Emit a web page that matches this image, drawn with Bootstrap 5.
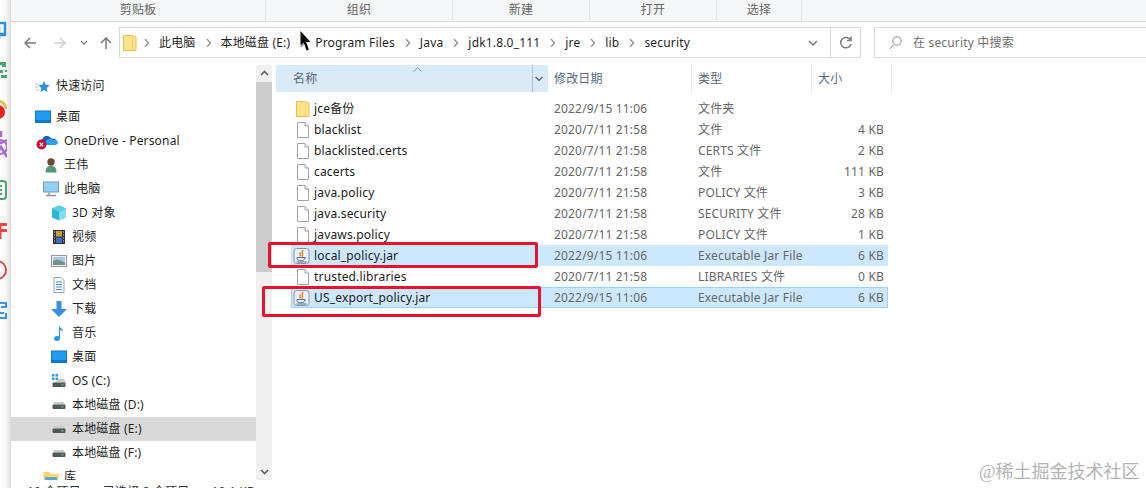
<!doctype html>
<html lang="zh-CN">
<head>
<meta charset="utf-8">
<title>security</title>
<link href="https://cdn.jsdelivr.net/npm/bootstrap@5.3.0/dist/css/bootstrap.min.css" rel="stylesheet">
<style>
html,body{height:488px;overflow:hidden;background:#fff}
body{font:12px/16px "Noto Sans","Noto Sans CJK SC",sans-serif;color:#1f1f1f;letter-spacing:.17px}
.app{height:488px;width:1146px}
.edge{width:11px;flex:none;background:linear-gradient(90deg,#fff 0,#f6f6f6 55%,#dcdcdc 100%);padding-top:10px;overflow:hidden}
.edge-cell{height:40px;flex:none;display:flex;align-items:center}
.edge svg{display:block;margin-left:-13px;flex:none}
.main-col{width:1135px;flex:none;min-height:0}
.ribbon{height:22px;background:#f5f6f7;border-bottom:1px solid #dadbdc;color:#666;flex:none;line-height:19px}
.ribbon>div{text-align:center;border-right:1px solid #e4e5e6;height:21px}
.rb1{width:255px}.rb2{width:187px}.rb3{width:137px}.rb4{width:127px}.rb5{width:85px}
.addr{height:43px;flex:none;padding:5px 0 0 13px}
.nav-ico{width:12px;height:12px;flex:none;display:block;margin-top:10px}
.nb1{margin-right:18px}.nb2{margin-right:14px}.nb3{width:8px;margin-right:12px}.nb4{margin-right:7px}
.crumbs{width:742px;height:31px;border:1px solid #d9d9d9;padding-left:3px;flex:none;white-space:nowrap}
.crumb-fold{flex:none;margin-right:-3px}
.crumb-sep{width:6px;height:8px;flex:none;margin:0 9px 0 10px}
.crumb-end{margin-left:auto;width:30px;height:29px;border-left:1px solid #d9d9d9}
.search{width:274px;height:31px;border:1px solid #d9d9d9;border-right:0;margin-left:13px;flex:none;padding-left:14px;color:#6d6d6d;gap:11px}
.panes{height:415px;flex:none}
.tree{width:245px;height:415px;flex:none;padding-top:9px;white-space:nowrap;overflow:hidden}
.tree-row{height:24px}
.tree-row svg{flex:none;margin-right:5px}
.l1{padding-left:24px}.l2{padding-left:32px}.l3{padding-left:40px}
.gapped{margin-bottom:7px}
.tree-sel{background:#d9d9d9}
.od{padding-left:25px}
.sbar{width:16px;flex:none;background:#f0f0f0}
.sb-btn{height:17px;flex:none}
.sb-thumb{height:190px;background:#cdcdcd;flex:none}
.files{margin-left:4px;min-width:0}
.fhead{height:27px;color:#56677c;flex:none}
.hname{width:272px;background:#d9ebf9;padding-left:17px;position:relative}
.hname i{position:absolute;right:15px;top:0;bottom:0;width:1px;background:#a9c4da}
.hcaret{position:absolute;left:137px;top:2px}
.hchev{position:absolute;right:5px;top:11px}
.hcell{border-right:1px solid #e5e5e5;padding-left:6px}
.hdate{width:144px}.htype{width:120px}.hsize{width:80px}
.fbody{padding-top:6px}
.frow{height:21px;width:597px;margin-left:15px;border:1px solid transparent;white-space:nowrap}
.frow.sel{background:#cce8ff}
.frow.sel2{border-color:#99d1ff}
.cn{width:257px;padding-left:4px;flex:none;color:#1a1a1a}
.cn svg{flex:none;margin-right:4px}
.cn svg.jar-ico{margin-left:-3px;margin-right:4px}
.cd{width:143px;padding-left:5px;color:#666;flex:none}
.ct{width:120px;padding-left:6px;color:#666;flex:none}
.cs{width:75px;text-align:right;color:#666;padding-right:3px;flex:none}
.status{padding:4px 0 0 16px;color:#333;white-space:nowrap;gap:22px}
.redbox{position:absolute;border:3px solid #e5132f;border-radius:2px;pointer-events:none}
.rb-a{left:268px;top:242px;width:270px;height:26px}
.rb-b{left:262px;top:286px;width:279px;height:31px}
.cursor{position:absolute;left:300px;top:31px}
.mark-wm{position:absolute;left:979px;top:462px;font:18px/20px "Liberation Serif","Noto Sans CJK SC",serif;letter-spacing:0;color:#b4b4b4;white-space:nowrap}
</style>
</head>
<body>
<svg width="0" height="0" class="position-absolute">
<defs>
<symbol id="folder" viewBox="0 0 14 16"><path d="M.5.5h9l3.500 1.500v13.500H.5z" fill="#ffe48a" stroke="#e4bd5a"/><path d="M9.500 2v13" stroke="#f2cf6e"/></symbol>
<symbol id="page" viewBox="0 0 14 16"><path d="M1.500.5h7.500l3.500 3.500v11.500h-11z" fill="#fff" stroke="#a3a3a3"/><path d="M9 .5V4h3.500" fill="#f0f0f0" stroke="#a3a3a3"/></symbol>
<symbol id="jar" viewBox="0 0 16 16"><rect x=".5" y=".5" width="15" height="15" rx="2.500" fill="#eaf0f6" stroke="#8296aa"/><path d="M9.800 2c-3.300 2.500 1.200 3.700-1.600 6.500M7 4.500c-1.500 1.500.5 2.300-.5 4" fill="none" stroke="#e8791d" stroke-width="1.300"/><path d="M3.500 9.500h7.500v1.200c0 1.300-1.400 2-3.700 2s-3.800-.7-3.800-2zM11 10h1.500" fill="none" stroke="#4f6f9a"/><path d="M3 14h10" stroke="#4f6f9a"/></symbol>
<symbol id="drive" viewBox="0 0 16 16"><path d="M2 7.500 3.500 5h9L14 7.500z" fill="#c9c9c9"/><rect x="1.500" y="7.500" width="13" height="4.500" rx="1" fill="#555"/><rect x="10.500" y="9" width="2" height="1.500" fill="#4ec46a"/></symbol>
<symbol id="desk" viewBox="0 0 16 16"><rect x=".5" y="2" width="15" height="11.500" fill="#1e9cf2" stroke="#0f74c2"/><path d="M1 12h14" stroke="#0a5a98"/></symbol>
<symbol id="csep" viewBox="0 0 6 8"><path d="M1 0l3.500 4L1 8" fill="none" stroke="#8a8a8a" stroke-width="1.200"/></symbol>
</defs>
</svg>

<div class="app d-flex">
  <div class="edge d-flex flex-column">
    <div class="edge-cell"><svg width="20" height="18" viewBox="0 0 20 18"><path d="M4 2h14v11H4M12 6v12M7 14h12" fill="none" stroke="#2f8fe6" stroke-width="2.500"/></svg></div>
    <div class="edge-cell"><svg width="20" height="18" viewBox="0 0 20 18"><path d="M4 1h15v5h-4V4H4zM13 9h3v3h-3zM18 9h2v2h-2zM14 14h6v3h-6z" fill="#46a86b"/></svg></div>
    <div class="edge-cell"><svg width="20" height="20" viewBox="0 0 20 20"><circle cx="11" cy="12" r="7" fill="#e8231c"/><path d="M10 1c5 0 9 3 9 8" fill="none" stroke="#f0b23a" stroke-width="2.500"/></svg></div>
    <div class="edge-cell"><svg width="20" height="40" viewBox="0 0 20 40"><path d="M14 1v6M6 10l8 3 6-3M8 27l6-10 6 10" fill="none" stroke="#a56ad8" stroke-width="2.500"/><circle cx="13" cy="17" r="7" fill="none" stroke="#a56ad8" stroke-width="2"/></svg></div>
    <div class="edge-cell"><svg width="20" height="20" viewBox="0 0 20 20"><rect x="4" y="1" width="15" height="18" rx="3" fill="none" stroke="#4aa56f" stroke-width="2"/><path d="M10 6h5M10 10h5M10 14h5" stroke="#4aa56f" stroke-width="2"/></svg></div>
    <div class="edge-cell"><svg width="20" height="17" viewBox="0 0 20 17"><path d="M11 1h9v3h-5.500v3H20v3h-5.500v7H11V4H5V1z" fill="#ef4444"/></svg></div>
    <div class="edge-cell"><svg width="20" height="22" viewBox="0 0 20 22"><circle cx="10" cy="11" r="9" fill="none" stroke="#e14a55" stroke-width="2"/><circle cx="10" cy="11" r="3" fill="#e14a55"/></svg></div>
    <div class="edge-cell"><svg width="20" height="18" viewBox="0 0 20 18"><path d="M11 6V2h8v5M19 12v5h-8M14 6h5M11 12h6" fill="none" stroke="#3c94e6" stroke-width="2.200"/></svg></div>
  </div>

  <div class="main-col d-flex flex-column">
    <div class="ribbon d-flex">
      <div class="rb1">剪贴板</div><div class="rb2">组织</div><div class="rb3">新建</div><div class="rb4">打开</div><div class="rb5">选择</div>
    </div>

    <div class="addr d-flex align-items-start">
      <svg class="nav-ico nb1" viewBox="0 0 12 12"><path d="M12 6H1M6 1 1 6l5 5" fill="none" stroke="#7b7b7b" stroke-width="1.500"/></svg>
      <svg class="nav-ico nb2" viewBox="0 0 12 12"><path d="M0 6h11M6 1l5 5-5 5" fill="none" stroke="#d0d0d0" stroke-width="1.500"/></svg>
      <svg class="nav-ico nb3" viewBox="0 0 8 12"><path d="M1 4l3 3 3-3" fill="none" stroke="#8a8a8a" stroke-width="1.400"/></svg>
      <svg class="nav-ico nb4" viewBox="0 0 12 12"><path d="M6 12V1M1 6l5-5 5 5" fill="none" stroke="#7b7b7b" stroke-width="1.500"/></svg>
      <div class="crumbs d-flex align-items-center">
        <svg class="crumb-fold" width="14" height="16"><use href="#folder"/></svg>
        <svg class="crumb-sep"><use href="#csep"/></svg><span>此电脑</span>
        <svg class="crumb-sep"><use href="#csep"/></svg><span>本地磁盘 (E:)</span>
        <svg class="crumb-sep"><use href="#csep"/></svg><span>Program Files</span>
        <svg class="crumb-sep"><use href="#csep"/></svg><span>Java</span>
        <svg class="crumb-sep"><use href="#csep"/></svg><span>jdk1.8.0_111</span>
        <svg class="crumb-sep"><use href="#csep"/></svg><span>jre</span>
        <svg class="crumb-sep"><use href="#csep"/></svg><span>lib</span>
        <svg class="crumb-sep"><use href="#csep"/></svg><span>security</span>
        <svg class="ms-auto me-2" width="10" height="8" viewBox="0 0 10 8"><path d="M1 2l4 4 4-4" fill="none" stroke="#7b7b7b" stroke-width="1.500"/></svg>
        <div class="crumb-end d-flex align-items-center justify-content-center ms-1">
          <svg width="14" height="14" viewBox="0 0 14 14"><path d="M11.500 4A5.200 5.200 0 1 0 12 8M8 4.500h4v-4" fill="none" stroke="#7b7b7b" stroke-width="1.500"/></svg>
        </div>
      </div>
      <div class="search d-flex align-items-center">
        <svg width="13" height="14" viewBox="0 0 13 14"><circle cx="8" cy="5" r="4.200" fill="none" stroke="#8c8c8c"/><path d="M5 8.500.8 13" stroke="#8c8c8c"/></svg>
        <span>在 security 中搜索</span>
      </div>
    </div>

    <div class="panes d-flex">
      <div class="tree">
        <div class="tree-row gapped d-flex align-items-center l1"><svg width="16" height="16" viewBox="0 0 16 16"><path d="M9 3l1.700 3.700 4 .5-3 2.700.8 4L9 12 5.500 14l.8-4-3-2.700 4-.5z" fill="#2d8fe3"/><path d="M0 6h4M0 9h3M1 12h3" stroke="#9cc9ee"/></svg><span>快速访问</span></div>
        <div class="tree-row d-flex align-items-center l1"><svg width="16" height="16"><use href="#desk"/></svg><span>桌面</span></div>
        <div class="tree-row d-flex align-items-center od"><svg width="23" height="18" viewBox="0 0 23 18"><path d="M6 9c0-3 2-5 5-5 2 0 3.500 1 4 2.500 3-.5 6 1 6 3.500 0 2-1.500 3-3 3H8c-1.500 0-2-2-2-4z" fill="#0f62b8"/><path d="M11 8c2-2 4-1 5-.3 3-.3 6 1 6 2.800 0 1.500-1.500 2.500-3 2.500h-9c-2 0-2.500-3.500 1-5z" fill="#2aa0ef"/><circle cx="5.500" cy="12.500" r="5" fill="#c40f35"/><path d="M3.700 10.700l3.600 3.600M7.300 10.700l-3.600 3.600" stroke="#fff" stroke-width="1.200"/></svg><span>OneDrive - Personal</span></div>
        <div class="tree-row d-flex align-items-center l2"><svg width="16" height="16" viewBox="0 0 16 16"><circle cx="8" cy="5" r="3.700" fill="#6b4a35"/><path d="M2.500 15.500c0-5 2-6.500 5.500-6.500s5.500 1.500 5.500 6.500z" fill="#4f9a74"/></svg><span>王伟</span></div>
        <div class="tree-row d-flex align-items-center l2"><svg width="16" height="16" viewBox="0 0 16 16"><rect x=".5" y="1" width="15" height="10" fill="#8fd0f6" stroke="#7d97ad"/><path d="M6 11.500v2M3 14.500h10" stroke="#8b96a1" stroke-width="1.500"/></svg><span>此电脑</span></div>
        <div class="tree-row d-flex align-items-center l3"><svg width="16" height="16" viewBox="0 0 16 16"><path d="M8 .5l7 3v9l-7 3-7-3v-9z" fill="#2bb6d8"/><path d="M8 7v8.500l7-3v-9z" fill="#7fdcf0"/><path d="M1 3.500 8 7l7-3.500L8 .5z" fill="#5ecde6"/></svg><span>3D 对象</span></div>
        <div class="tree-row d-flex align-items-center l3"><svg width="16" height="16" viewBox="0 0 16 16"><rect x="2" y="1" width="12" height="14" fill="#333"/><rect x="5" y="2" width="6" height="5.500" fill="#c5a13a"/><rect x="5" y="8.500" width="6" height="5.500" fill="#3c6fc8"/><path d="M3 3h1M3 6h1M3 9h1M3 12h1M12 3h1M12 6h1M12 9h1M12 12h1" stroke="#ddd"/></svg><span>视频</span></div>
        <div class="tree-row d-flex align-items-center l3"><svg width="16" height="16" viewBox="0 0 16 16"><rect x=".5" y="2.500" width="15" height="11" fill="#eef2f6" stroke="#8b97a3"/><path d="M2 4h12v4H2z" fill="#a8c8e8"/><path d="M2 8l4-1.500L14 9v3H2z" fill="#6f9484"/></svg><span>图片</span></div>
        <div class="tree-row d-flex align-items-center l3"><svg width="16" height="16" viewBox="0 0 16 16"><path d="M3 .5h7l3 3v12H3z" fill="#f7fafc" stroke="#98a4b0"/><path d="M5 5h6M5 7.500h6M5 10h6M5 12.500h6" stroke="#4f8fc9"/></svg><span>文档</span></div>
        <div class="tree-row d-flex align-items-center l3"><svg width="16" height="16" viewBox="0 0 16 16"><path d="M5.500 0h5v8H16l-8 8-8-8h5.500z" fill="#3a8fdc"/></svg><span>下载</span></div>
        <div class="tree-row d-flex align-items-center l3"><svg width="16" height="16" viewBox="0 0 16 16"><path d="M8 0c0 3 4 3 4 7-1-1.500-2-2-3-2v8c0 1.700-1.500 3-3.300 3S3 15 3 13.500 4.500 11 6 11c.6 0 1.200.1 2 .5z" fill="#1f97ea"/></svg><span>音乐</span></div>
        <div class="tree-row d-flex align-items-center l3"><svg width="16" height="16"><use href="#desk"/></svg><span>桌面</span></div>
        <div class="tree-row d-flex align-items-center l3"><svg width="16" height="16" viewBox="0 0 16 16"><path d="M1 1h2.500v2.500H1zM4.500 1H7v2.500H4.500zM1 4.500h2.500V7H1zM4.500 4.500H7V7H4.500z" fill="#22a3e8"/><path d="M3 9.500 8 6h5l2 3.500z" fill="#c9c9c9"/><rect x="1.500" y="9.500" width="13" height="4.500" rx="1" fill="#555"/><rect x="10.500" y="11" width="2" height="1.500" fill="#4ec46a"/></svg><span>OS (C:)</span></div>
        <div class="tree-row d-flex align-items-center l3"><svg width="16" height="16"><use href="#drive"/></svg><span>本地磁盘 (D:)</span></div>
        <div class="tree-row d-flex align-items-center l3 tree-sel"><svg width="16" height="16"><use href="#drive"/></svg><span>本地磁盘 (E:)</span></div>
        <div class="tree-row d-flex align-items-center l3"><svg width="16" height="16"><use href="#drive"/></svg><span>本地磁盘 (F:)</span></div>
        <div class="tree-row d-flex align-items-center l2"><svg width="16" height="16" viewBox="0 0 16 16"><path d="M.5 3h6l1.500 2h7.500v9H.5z" fill="#ffd56b"/><path d="M2 8h12v6H2z" fill="#5aa6d8"/></svg><span>库</span></div>
      </div>

      <div class="sbar d-flex flex-column">
        <div class="sb-btn d-flex align-items-center justify-content-center"><svg width="9" height="7" viewBox="0 0 9 7"><path d="M1 5l3.500-3.500L8 5" fill="none" stroke="#606060" stroke-width="1.600"/></svg></div>
        <div class="sb-thumb"></div>
        <div class="flex-grow-1"></div>
        <div class="sb-btn d-flex align-items-center justify-content-center"><svg width="9" height="7" viewBox="0 0 9 7"><path d="M1 2l3.500 3.500L8 2" fill="none" stroke="#606060" stroke-width="1.600"/></svg></div>
      </div>

      <div class="files flex-grow-1">
        <div class="fhead d-flex">
          <div class="hname d-flex align-items-center">名称<i></i>
            <svg class="hcaret" width="9" height="5" viewBox="0 0 9 5"><path d="M.5 4.500 4.500.8l4 3.700" fill="none" stroke="#8d97a0"/></svg>
            <svg class="hchev" width="8" height="6" viewBox="0 0 8 6"><path d="M.5 1 4 4.500 7.500 1" fill="none" stroke="#4a5a6a" stroke-width="1.100"/></svg>
          </div>
          <div class="hcell hdate d-flex align-items-center">修改日期</div>
          <div class="hcell htype d-flex align-items-center">类型</div>
          <div class="hcell hsize d-flex align-items-center">大小</div>
        </div>
        <div class="fbody">
          <div class="frow d-flex align-items-center"><div class="cn d-flex align-items-center"><svg width="14" height="16"><use href="#folder"/></svg>jce备份</div><div class="cd">2022/9/15 11:06</div><div class="ct">文件夹</div><div class="cs"></div></div>
          <div class="frow d-flex align-items-center"><div class="cn d-flex align-items-center"><svg width="14" height="16"><use href="#page"/></svg>blacklist</div><div class="cd">2020/7/11 21:58</div><div class="ct">文件</div><div class="cs">4 KB</div></div>
          <div class="frow d-flex align-items-center"><div class="cn d-flex align-items-center"><svg width="14" height="16"><use href="#page"/></svg>blacklisted.certs</div><div class="cd">2020/7/11 21:58</div><div class="ct">CERTS 文件</div><div class="cs">2 KB</div></div>
          <div class="frow d-flex align-items-center"><div class="cn d-flex align-items-center"><svg width="14" height="16"><use href="#page"/></svg>cacerts</div><div class="cd">2020/7/11 21:58</div><div class="ct">文件</div><div class="cs">111 KB</div></div>
          <div class="frow d-flex align-items-center"><div class="cn d-flex align-items-center"><svg width="14" height="16"><use href="#page"/></svg>java.policy</div><div class="cd">2020/7/11 21:58</div><div class="ct">POLICY 文件</div><div class="cs">3 KB</div></div>
          <div class="frow d-flex align-items-center"><div class="cn d-flex align-items-center"><svg width="14" height="16"><use href="#page"/></svg>java.security</div><div class="cd">2020/7/11 21:58</div><div class="ct">SECURITY 文件</div><div class="cs">28 KB</div></div>
          <div class="frow d-flex align-items-center"><div class="cn d-flex align-items-center"><svg width="14" height="16"><use href="#page"/></svg>javaws.policy</div><div class="cd">2020/7/11 21:58</div><div class="ct">POLICY 文件</div><div class="cs">1 KB</div></div>
          <div class="frow sel d-flex align-items-center"><div class="cn d-flex align-items-center"><svg class="jar-ico" width="17" height="16"><use href="#jar"/></svg>local_policy.jar</div><div class="cd">2022/9/15 11:06</div><div class="ct">Executable Jar File</div><div class="cs">6 KB</div></div>
          <div class="frow d-flex align-items-center"><div class="cn d-flex align-items-center"><svg width="14" height="16"><use href="#page"/></svg>trusted.libraries</div><div class="cd">2020/7/11 21:58</div><div class="ct">LIBRARIES 文件</div><div class="cs">0 KB</div></div>
          <div class="frow sel sel2 d-flex align-items-center"><div class="cn d-flex align-items-center"><svg class="jar-ico" width="17" height="16"><use href="#jar"/></svg>US_export_policy.jar</div><div class="cd">2022/9/15 11:06</div><div class="ct">Executable Jar File</div><div class="cs">6 KB</div></div>
        </div>
      </div>
    </div>

    <div class="status d-flex"><span>10 个项目</span><span>已选择 2 个项目</span><span>10.1 KB</span></div>
  </div>
</div>

<div class="redbox rb-a"></div>
<div class="redbox rb-b"></div>
<svg class="cursor" width="11" height="20" viewBox="0 0 11 20"><path d="M.5 0v14.500l3.300-3L6.500 19.500l2.300-.8-2.600-7.700h4.300z" fill="#0a0a0a"/></svg>
<div class="mark-wm">@稀土掘金技术社区</div>

<script src="https://cdn.jsdelivr.net/npm/bootstrap@5.3.0/dist/js/bootstrap.bundle.min.js"></script>
</body>
</html>
